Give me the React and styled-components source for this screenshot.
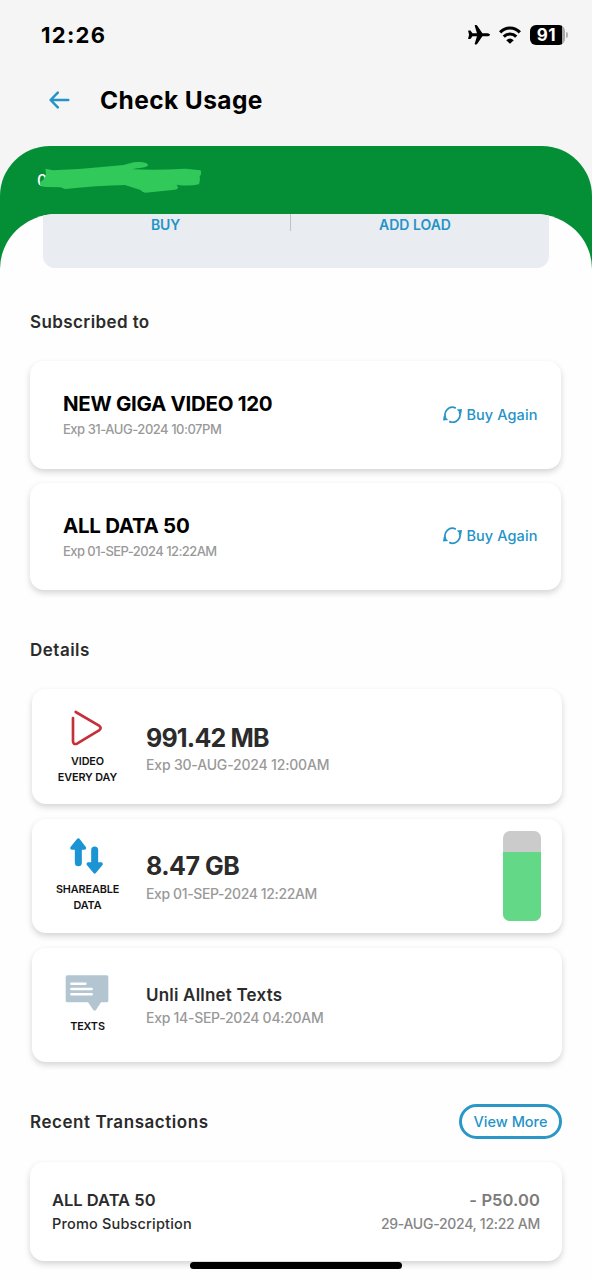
import React from 'react';
import styled, { createGlobalStyle } from 'styled-components';

const GlobalStyle = createGlobalStyle`
  * {
    box-sizing: border-box;
  }
  body {
    margin: 0;
    background: #f5f5f5;
    font-family: Inter, 'Open Sans', sans-serif;
  }
`;

const Screen = styled.div`
  position: relative;
  width: 592px;
  height: 1280px;
  overflow: hidden;
  background: #f5f5f5;
`;

const Text = styled.div`
  font-size: ${(p) => p.$size}px;
  font-weight: ${(p) => p.$weight || 500};
  line-height: ${(p) => p.$line || 24}px;
  letter-spacing: ${(p) => p.$spacing || 0}px;
  color: ${(p) => p.$color || '#2b2b2b'};
  white-space: nowrap;
`;

const StatusBar = styled.div`
  display: flex;
  align-items: center;
  justify-content: space-between;
  height: 70px;
  padding: 0 24px 0 41px;
`;
const StatusIcons = styled.div`
  display: flex;
  align-items: center;
  gap: 9px;
`;
const Battery = styled.div`
  display: flex;
  align-items: center;
  gap: 1px;
`;
const BatteryBody = styled.div`
  width: 35px;
  height: 20px;
  padding-right: 2px;
  border-radius: 6px;
  background: linear-gradient(to right, #000 32px, #a9a9a9 32px);
  color: #fff;
  font-size: 17px;
  font-weight: 700;
  line-height: 20px;
  letter-spacing: 0.6px;
  text-align: center;
`;
const BatteryTip = styled.div`
  width: 2px;
  height: 6px;
  border-radius: 0 2px 2px 0;
  background: #b4b4b4;
`;

const Header = styled.header`
  display: flex;
  align-items: center;
  gap: 30px;
  height: 76px;
  padding: 0 0 16px 49px;
`;

const Banner = styled.div`
  border-radius: 50px 50px 0 0;
  background: #048f37;
`;
const Account = styled.div`
  display: flex;
  align-items: center;
  height: 68px;
  padding-left: 37px;
`;
const Scribble = styled.svg`
  margin: -5px 0 0 -7px;
`;

const Sheet = styled.main`
  height: 1066px;
  border-radius: 57px 57px 0 0 / 55px 55px 0 0;
  overflow: hidden;
  background: #fefefe;
`;

const Actions = styled.div`
  display: flex;
  width: 506px;
  height: 54px;
  margin-left: 43px;
  border-radius: 0 0 12px 12px;
  background: #e9edf2;
`;
const Action = styled.div`
  width: ${(p) => p.$width}px;
  padding-right: ${(p) => p.$inset}px;
  text-align: center;
`;
const Divider = styled.div`
  width: 1px;
  height: 17px;
  background: #bfc3c8;
`;

const SectionHead = styled.div`
  display: flex;
  align-items: center;
  justify-content: space-between;
  height: ${(p) => p.$height}px;
  padding: ${(p) => p.$top}px 30px 0;
`;

const Card = styled.div`
  display: flex;
  align-items: center;
  border-radius: 14px;
  background: #fff;
  box-shadow: 0 3px 6px rgba(0, 0, 0, 0.17);
`;

const Subscriptions = styled.section`
  display: flex;
  flex-direction: column;
  gap: 14px;
  padding: 0 31.5px 0 30px;
`;
const SubscriptionCard = styled(Card)`
  justify-content: space-between;
  height: 107.5px;
  padding: 2.5px 23px 0 33px;
`;
const BuyAgain = styled.div`
  display: flex;
  align-items: center;
  gap: 4px;
  margin-top: -3px;
`;

const Details = styled.section`
  display: flex;
  flex-direction: column;
  gap: 15px;
  padding: 0 30px 0 32px;
`;
const DetailCard = styled(Card)`
  align-items: flex-start;
  height: ${(p) => p.$height}px;
`;
const Kind = styled.div`
  display: flex;
  flex-direction: column;
  align-items: center;
  gap: 8px;
  width: 111px;
  padding-top: ${(p) => p.$top}px;
  text-align: center;

  svg {
    margin-right: 2px;
  }
`;
const Amount = styled.div`
  flex: 1;
  padding: ${(p) => p.$top}px 0 0 3px;
`;
const Meter = styled.div`
  display: flex;
  flex-direction: column;
  justify-content: flex-end;
  width: 38px;
  height: 90px;
  margin: 12px 21px 0 0;
  border-radius: 7px;
  overflow: hidden;
  background: #cbcbcb;
`;
const MeterFill = styled.div`
  background: #63d988;
`;

const ViewMore = styled.button`
  width: 103px;
  height: 35px;
  padding: 0;
  border: 3px solid #2b97c6;
  border-radius: 18px;
  background: #fff;
  font-family: inherit;
`;
const TransactionCard = styled(Card)`
  justify-content: space-between;
  height: 99px;
  margin: 0 30px;
  padding: 1px 22px 0;
`;
const Right = styled.div`
  text-align: right;
`;

const HomeBar = styled.div`
  position: absolute;
  left: 190px;
  bottom: 11px;
  width: 212px;
  height: 7px;
  border-radius: 4px;
  background: #000;
`;

const blue = '#2493c7';
const grey = '#999';

const PlaneIcon = () => (
  <svg width="22" height="19.500" viewBox="0 0 64 57">
    <path d="M64 28.500c0 3-5 4.500-9 4.500H42L27 55q-1.500 2-3 2h-3q-2 0-1.500-2L26 33H13L7 41H1.500Q0 41 .3 39.500L3 28.500.3 17.500Q0 16 1.500 16H7l6 8h13L19.500 2Q19 0 21 0h3q1.500 0 3 2l15 22h13c4 0 9 1.500 9 4.500z" />
  </svg>
);

const WifiIcon = () => (
  <svg width="22" height="18" viewBox="0 0 67 54">
    <g fill="none" stroke="#000" strokeWidth="9.500">
      <path d="M3.500 19C20 1.500 47 1.500 63.500 19" />
      <path d="M14.500 32C25 21.500 42 21.500 52.500 32" />
    </g>
    <path d="M22 43Q33.500 33 45 43L33.500 54z" />
  </svg>
);

const BackIcon = () => (
  <svg width="21" height="18" viewBox="0 0 21 18" fill="none" stroke={blue} strokeWidth="2.500" strokeLinecap="round" strokeLinejoin="round">
    <path d="M19.300 9H2M8.800 1.600L1.600 9l7.200 7.400" />
  </svg>
);

const RenewIcon = () => (
  <svg width="19" height="17.500" viewBox="0 0 55 51">
    <g fill="none" stroke={blue} strokeWidth="5">
      <path d="M7.500 34A21.500 21.500 0 0 1 37 6.200" />
      <path d="M47.500 17A21.500 21.500 0 0 1 18 44.800" />
    </g>
    <path d="M40 10.500L55 8.500 53 23z" fill={blue} />
    <path d="M15 40.500L0 42.500 2 28z" fill={blue} />
  </svg>
);

const VideoIcon = () => (
  <svg width="32" height="36" viewBox="0 0 96 108" fill="none" stroke="#c4313b" strokeWidth="8" strokeLinecap="round" strokeLinejoin="round">
    <path d="M14 6L84 47Q94 54 84 61L18 101Q6 105 6 94V24" />
  </svg>
);

const DataIcon = () => (
  <svg width="33" height="36" viewBox="0 0 98 108" fill="#1b94d4">
    <path d="M21 2q3.500-3 7 0L47 27q3 7-4 8H35V74a10.500 10.500 0 0 1-21 0V35H5q-7-1-4-8z" />
    <path d="M63 36a10.500 10.500 0 0 1 21 0V73h9q7 1 4 8L77 105q-3.500 4-7 0L50 81q-3-7 4-8h9z" />
  </svg>
);

const TextsIcon = () => (
  <svg width="44" height="36" viewBox="0 0 130 108">
    <path d="M6 1H124q5 0 5 5V77q0 5-5 5H107L92 105q-4 4-8 0L68 82H6q-5 0-5-5V6Q1 1 6 1z" fill="#b3c5d0" />
    <path d="M18 26H60M18 42H79M18 58H79" stroke="#fff" strokeWidth="7.500" strokeLinecap="round" />
  </svg>
);

const subscriptions = [
  { name: 'NEW GIGA VIDEO 120', exp: 'Exp 31-AUG-2024 10:07PM', expSpacing: -0.48 },
  { name: 'ALL DATA 50', exp: 'Exp 01-SEP-2024 12:22AM', expSpacing: -0.57 },
];

const details = [
  {
    icon: <VideoIcon />, label: ['VIDEO', 'EVERY DAY'], value: '991.42 MB', exp: 'Exp 30-AUG-2024 12:00AM',
    height: 115, iconTop: 20.5, textTop: 34, size: 25, line: 30, spacing: -0.8, expSpacing: -0.18,
  },
  {
    icon: <DataIcon />, label: ['SHAREABLE', 'DATA'], value: '8.47 GB', exp: 'Exp 01-SEP-2024 12:22AM',
    height: 114, iconTop: 19, textTop: 32, size: 25, line: 31, spacing: -0.5, expSpacing: -0.38,
    meter: 77,
  },
  {
    icon: <TextsIcon />, label: ['TEXTS'], value: 'Unli Allnet Texts', exp: 'Exp 14-SEP-2024 04:20AM',
    height: 113.5, iconTop: 26.5, textTop: 36.5, size: 17, line: 21, spacing: 0.2, expSpacing: -0.28,
  },
];

function Subscription({ item }) {
  return (
    <SubscriptionCard>
      <div>
        <Text $size={20.5} $weight={700} $line={26} $color="#000" $spacing={-0.3}>{item.name}</Text>
        <Text $size={13} $color={grey} $spacing={item.expSpacing}>{item.exp}</Text>
      </div>
      <BuyAgain>
        <RenewIcon />
        <Text $size={14.5} $color={blue} $spacing={0.1}>Buy Again</Text>
      </BuyAgain>
    </SubscriptionCard>
  );
}

function Detail({ item }) {
  return (
    <DetailCard $height={item.height}>
      <Kind $top={item.iconTop}>
        {item.icon}
        <div>
          {item.label.map((line) => (
            <Text key={line} $size={10.8} $weight={600} $line={16} $color="#111" $spacing={-0.1}>{line}</Text>
          ))}
        </div>
      </Kind>
      <Amount $top={item.textTop}>
        <Text $size={item.size} $weight={item.size > 20 ? 700 : 600} $line={item.line} $spacing={item.spacing}>
          {item.value}
        </Text>
        <Text $size={14} $color={grey} $spacing={item.expSpacing}>{item.exp}</Text>
      </Amount>
      {item.meter && (
        <Meter>
          <MeterFill style={{ height: `${item.meter}%` }} />
        </Meter>
      )}
    </DetailCard>
  );
}

function App() {
  return (
    <Screen>
      <GlobalStyle />
      <StatusBar>
        <Text $size={22} $weight={700} $color="#000" $spacing={1.3}>12:26</Text>
        <StatusIcons>
          <PlaneIcon />
          <WifiIcon />
          <Battery>
            <BatteryBody>91</BatteryBody>
            <BatteryTip />
          </Battery>
        </StatusIcons>
      </StatusBar>
      <Header>
        <BackIcon />
        <Text $size={24.5} $weight={700} $line={32} $color="#000" $spacing={0.4}>Check Usage</Text>
      </Header>
      <Banner>
        <Account>
          <Text $size={16} $color="#fff">0</Text>
          <Scribble width="161" height="31" viewBox="0 0 474 93" preserveAspectRatio="none">
            <path
              d="M16 20L38 25Q110 23 182 15L246 9 276 1Q309-3 318 8 321 16 286 19L272 22Q350 25 428 20L472 25Q480 33 470 42 472 56 468 67 440 74 402 68L406 75Q408 84 390 84L310 92Q300 90 296 84L250 69Q170 71 74 81L60 76 20 75Q-4 75 0 62 14 52 18 40z"
              fill="#32c95b"
            />
          </Scribble>
        </Account>
        <Sheet>
          <Actions>
            <Action $width={247} $inset={2}>
              <Text $size={14} $weight={600} $line={21} $color={blue} $spacing={-0.2}>BUY</Text>
            </Action>
            <Divider />
            <Action $width={258} $inset={10}>
              <Text $size={14} $weight={600} $line={21} $color={blue}>ADD LOAD</Text>
            </Action>
          </Actions>
          <SectionHead $height={93} $top={14}>
            <Text $size={17} $weight={600} $spacing={0.4}>Subscribed to</Text>
          </SectionHead>
          <Subscriptions>
            {subscriptions.map((item) => (
              <Subscription key={item.name} item={item} />
            ))}
          </Subscriptions>
          <SectionHead $height={99} $top={21}>
            <Text $size={17} $weight={600} $spacing={0.5}>Details</Text>
          </SectionHead>
          <Details>
            {details.map((item) => (
              <Detail key={item.value} item={item} />
            ))}
          </Details>
          <SectionHead $height={100} $top={20}>
            <Text $size={17} $weight={600} $spacing={0.55}>Recent Transactions</Text>
            <ViewMore>
              <Text $size={14.5} $color={blue}>View More</Text>
            </ViewMore>
          </SectionHead>
          <TransactionCard>
            <div>
              <Text $size={16.5} $weight={600}>ALL DATA 50</Text>
              <Text $size={14.5} $spacing={0.18}>Promo Subscription</Text>
            </div>
            <Right>
              <Text $size={16.5} $weight={600} $color="#7b7b7b" $spacing={0.1}>- P50.00</Text>
              <Text $size={14} $color="#858585" $spacing={-0.28}>29-AUG-2024, 12:22 AM</Text>
            </Right>
          </TransactionCard>
        </Sheet>
      </Banner>
      <HomeBar />
    </Screen>
  );
}

export default App;
